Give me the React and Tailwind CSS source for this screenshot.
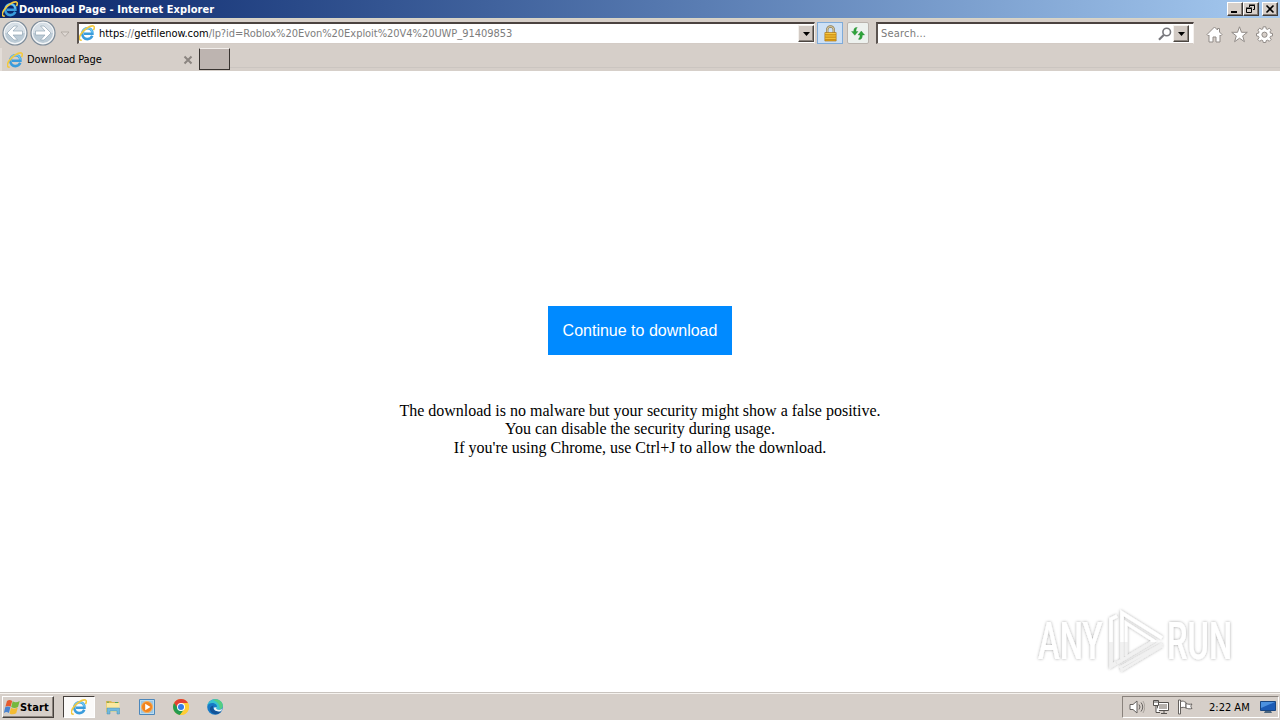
const InternetExplorerIcon = ({ className }) => (
    <svg viewBox="0 0 16 16" className={className} fill="none">
        <path d="M13.300 10.800C12.400 12.900 10.600 14.100 8.400 14.100C5.300 14.100 3.300 11.800 3.300 8.700C3.300 5.500 5.500 3.300 8.500 3.300C11.500 3.300 13.400 5.400 13.400 8.700H5" stroke="#3a9cdc" strokeWidth="2.600" />
        <path d="M3.300 7.600C3.900 4.900 5.900 3.200 8.500 3.200C11 3.200 12.900 4.800 13.300 7.600" stroke="#6fcbf6" strokeWidth="1.300" />
        <path d="M2.700 15C-.2 15.900-.3 12.500 2 9C5.300 4 11.700 0 14.500 1.100C15.700 1.700 15.400 3.600 14.400 5.200" stroke="#f3c93f" strokeWidth="1.600" />
    </svg>
);

const NavArrow = ({ forward }) => (
    <svg viewBox="0 0 26 26" className="h-[26px] w-[26px]">
        <circle cx="13" cy="13" r="12" fill="#f3f5f7" stroke="#7c8b99" strokeWidth="1.200" />
        <circle cx="13" cy="13" r="10" fill="#bccbd6" />
        <path d="M3 13a10 10 0 0 1 20 0z" fill="#d8e0e7" />
        <path
            d="M5 13L12 6h3.500L11 11h9.500v4H11l4.500 5H12z"
            fill="#fff"
            stroke="#94a6b5"
            strokeWidth=".7"
            transform={forward ? "rotate(180 13 13)" : undefined}
        />
    </svg>
);

const DropButton = () => (
    <div className="flex h-[17px] w-4 shrink-0 items-center justify-center border border-t-[#f4f1ed] border-r-[#4c4641] border-b-[#4c4641] border-l-[#f4f1ed] bg-[#d2cac4] shadow-[inset_-1px_-1px_0_#8b847e]">
        <svg viewBox="0 0 7 4" className="h-1 w-[7px]">
            <path d="M0 0h7L3.500 4z" fill="#000" />
        </svg>
    </div>
);

const WindowButton = ({ children }) => (
    <div className="h-[14px] w-4 border border-t-white border-r-[#403c39] border-b-[#403c39] border-l-white bg-[#d6cfc9] shadow-[inset_-1px_-1px_0_#847d77]">
        <svg viewBox="0 0 14 12" className="h-3 w-[14px]" fill="none" stroke="#000">
            {children}
        </svg>
    </div>
);

const TitleBar = () => (
    <div className="flex h-[18px] items-center bg-linear-to-r from-[#0a246a] to-[#a6caf0] pr-[2px] pl-[2px]">
        <InternetExplorerIcon className="h-4 w-4 shrink-0" />
        <span className="ml-px text-[11px] font-bold tracking-[0.07px] text-white">Download Page - Internet Explorer</span>
        <div className="ml-auto flex">
            <WindowButton>
                <path d="M3 9h6" strokeWidth="2" />
            </WindowButton>
            <WindowButton>
                <path d="M5.500 4V2.500h5v4H9M5 2h6M2.500 5.500h5v4h-5zM2 5h6" />
            </WindowButton>
            <div className="ml-[3px]">
                <WindowButton>
                    <path d="M3.500 2.500l7 7M10.500 2.500l-7 7" strokeWidth="1.600" />
                </WindowButton>
            </div>
        </div>
    </div>
);

const AddressBar = () => (
    <div className="flex h-[30px] items-start border-t border-[#d8d5c5] pl-[2px]">
        <div className="flex pt-px">
            <NavArrow />
            <div className="ml-[2px]">
                <NavArrow forward />
            </div>
        </div>
        <svg viewBox="0 0 10 7" className="mt-[12px] ml-[4px] h-[7px] w-[10px]">
            <path d="M1 1h8L5 5.500z" fill="#dfd9d4" stroke="#aaa39d" strokeWidth=".8" />
        </svg>
        <div className="mt-[3px] ml-[7px] flex h-[22px] w-[738px] items-center border-t-2 border-r border-b border-l-2 border-t-[#4b4340] border-r-[#f5f1ee] border-b-[#d4ccc6] border-l-[#5b5450] bg-white">
            <InternetExplorerIcon className="mb-px h-4 w-4 shrink-0" />
            <span className="ml-1 text-[11px] whitespace-nowrap text-[#7d7d7d]">
                <span className="tracking-[-0.04px]">
                    <span className="text-black">https</span>://<span className="text-black">getfilenow.com</span>
                </span>
                <span className="tracking-[-0.04px]">/lp?id=Roblox%20Evon%20Exploit%20V4%20UWP_91409853</span>
            </span>
            <div className="ml-auto">
                <DropButton />
            </div>
        </div>
        <div className="mt-[3px] ml-[2px] flex h-[22px] w-[26px] items-center justify-center border border-[#7fabd9] bg-[#cde0f5]">
            <svg viewBox="0 0 16 18" className="h-[17px] w-[15px]">
                <path d="M4.500 9V5a3.500 3.500 0 0 1 7 0v4" fill="none" stroke="#8b7b58" strokeWidth="2.500" />
                <path d="M4.500 9V5a3.500 3.500 0 0 1 7 0v4" fill="none" stroke="#e8d9aa" strokeWidth="1" />
                <path d="M2 8h12v9H2z" fill="#e6a91b" stroke="#a87315" strokeWidth=".7" />
                <path d="M2.500 9h11M2.500 11.500h11M2.500 14h11" stroke="#f6cb4a" />
                <path d="M2.500 10.500h11M2.500 13h11M2.500 15.500h11" stroke="#b67813" strokeWidth=".6" />
            </svg>
        </div>
        <div className="mt-[3px] ml-1 flex h-[22px] w-[22px] items-center justify-center rounded-[2px] border border-[#bab3ad] bg-[#edf1ee]">
            <svg viewBox="0 0 16 16" className="h-4 w-4" fill="#2fa43a" stroke="#167b24" strokeWidth=".3">
                <path d="M7.300 2.500C5 2 3.700 3.500 3.700 6.500H1.500l3.300 3.800L8 6.500H6c0-2 .3-3 1.300-4z" />
                <path d="M8.700 14.500c2.300.3 3.700-1 3.700-4.500h2.200l-3.300-4L8 10h2c0 2-.3 3-1.300 3.600z" />
            </svg>
        </div>
        <div className="mt-[3px] ml-[7px] flex h-[22px] w-[318px] items-center border-t-2 border-r border-b border-l-2 border-t-[#4b4340] border-r-[#f5f1ee] border-b-[#d4ccc6] border-l-[#5b5450] bg-white pr-1 pl-[3px]">
            <span className="text-[11px] tracking-[0.2px] text-[#7a7a7a]">Search...</span>
            <svg viewBox="0 0 14 14" className="mr-px ml-auto h-[14px] w-[14px]" fill="none" stroke="#77777c">
                <circle cx="8.700" cy="5" r="3.800" strokeWidth="1.600" />
                <path d="M5.700 8L1 12.700" strokeWidth="2.200" />
            </svg>
            <DropButton />
        </div>
        <div className="mt-[7px] ml-[12px] flex gap-2">
            <svg viewBox="0 0 17 17" className="h-[17px] w-[17px]" fill="#fff" stroke="#918b87" strokeLinejoin="round">
                <path d="M1 8.500L8.500 1l3 3V2.500h2V6L16 8.500l-1.200 1.300-.8-.8v7h-4v-5H7v5H3V9l-.8.800z" />
            </svg>
            <svg viewBox="0 0 17 17" className="h-[17px] w-[17px]" fill="#fff" stroke="#918b87" strokeLinejoin="round">
                <path d="M8.500.8l2 5.500h5.800l-4.600 3.600 1.700 5.800-4.900-3.500-4.900 3.500 1.700-5.800L.7 6.300h5.800z" />
            </svg>
            <svg viewBox="0 0 17 17" className="h-[17px] w-[17px]" fill="#fff" stroke="#918b87" strokeLinejoin="round">
                <path d="M7.200.8h2.600l.4 2.100 1.300.5 1.800-1.200 1.900 1.900L14 5.900l.5 1.300 2 .3v2.400l-2 .4-.5 1.300 1.200 1.800-1.900 1.900-1.800-1.200-1.300.5-.4 1.900H7.200l-.4-1.900-1.300-.5-1.800 1.200-1.900-1.900L3 11.600l-.5-1.300-2-.4V7.500l2-.3L3 5.900 1.800 4.100l1.900-1.900 1.800 1.200 1.300-.5z" />
                <circle cx="8.500" cy="8.700" r="2.600" fill="#d6cfc9" />
            </svg>
        </div>
    </div>
);

const TabStrip = () => (
    <div className="flex h-[23px] items-start">
        <div className="flex h-[23px] w-[199px] items-center border-l-2 border-[#e3ddd8] pr-[6px] pl-[5px]">
            <InternetExplorerIcon className="h-4 w-4 shrink-0" />
            <span className="ml-1 text-[11px] tracking-[-0.12px]">Download Page</span>
            <svg viewBox="0 0 10 10" className="ml-auto h-[10px] w-[10px]" stroke="#8b8580" strokeWidth="2">
                <path d="M1.500 1.500l7 7M8.500 1.500l-7 7" />
            </svg>
        </div>
        <div className="h-[22px] w-[31px] border border-t-[#f2eeeb] border-r-[#383330] border-b-[#383330] border-l-[#383330] bg-[#bdb4b0]" />
        <div className="mt-[19px] h-px flex-1 bg-[#cbc5c0]" />
    </div>
);

const Watermark = () => (
    <svg viewBox="0 0 250 80" className="absolute right-[20px] bottom-[11px] h-20 w-[250px] overflow-visible">
        <defs>
            <linearGradient id="glass" gradientUnits="userSpaceOnUse" x1="0" y1="0" x2="0" y2="80">
                <stop offset="0.510" stopColor="#ffffff" />
                <stop offset="0.510" stopColor="#f1f1f1" />
            </linearGradient>
            <filter id="halo" x="-10%" y="-20%" width="120%" height="140%">
                <feDropShadow dx="0" dy="0" stdDeviation="1.800" floodColor="#000" floodOpacity="0.360" />
            </filter>
        </defs>
        <g filter="url(#halo)" fontFamily="Roboto" fontWeight="500" fontSize="52" fill="url(#glass)">
            <text transform="translate(28 58) scale(0.630 1)">ANY</text>
            <text transform="translate(157 58) scale(0.630 1)">RUN</text>
            <g fill="none" stroke="url(#glass)" strokeWidth="3.600">
                <path d="M107 15L101 18V65L106 62" />
                <path d="M112 58V12L152 37" />
                <path d="M116 55V22L144 40L107 62" strokeWidth="3" />
                <path d="M152 43L111 66L112 69L152 45" strokeWidth="2.500" />
            </g>
        </g>
    </svg>
);

const DownloadPage = () => (
    <div className="relative flex h-[621px] flex-col items-center bg-white pt-[235px]">
        <button className="h-[49px] w-[184px] bg-[#008aff] font-['Liberation_Sans',sans-serif] text-[16px] text-white">
            Continue to download
        </button>
        <div className="mt-[47px] text-center font-['Liberation_Serif',serif] text-[16px] leading-[18px] text-black">
            <p>The download is no malware but your security might show a false positive.</p>
            <p>You can disable the security during usage.</p>
            <p className="mt-px">If you're using Chrome, use Ctrl+J to allow the download.</p>
        </div>
        <Watermark />
    </div>
);

const Taskbar = () => (
    <div className="flex h-7 items-start border-t border-[#c9c4bf] bg-[#d6cfc9] pl-[2px] shadow-[inset_0_1px_0_#f6f3ef]">
        <div className="mt-[3px] flex h-[22px] w-[52px] items-center border border-t-white border-r-[#45403c] border-b-[#45403c] border-l-white pl-px shadow-[inset_-1px_-1px_0_#8b847e]">
            <svg viewBox="0 0 16 16" className="h-4 w-4 shrink-0">
                <path d="M3 2C5 .5 6.500 1 8.200 2L6.600 7.700C5 6.700 3.400 6.700 1.400 7.700z" fill="#e65b2e" />
                <path d="M8.700 2.300c2 1.300 4.300 1.300 7 -.4l-1.600 5.900c-2.300 1.600-4.800 1.600-6.900.2z" fill="#75b83d" />
                <path d="M1.200 8.200c1.900-1 3.700-1 5.200 0L4.900 14c-1.800-1.200-3.300-1.200-5 0z" fill="#4a83cf" />
                <path d="M7 8.700c2 1.300 4.500 1.300 6.800-.2L12.200 14.200c-2.200 1.500-4.700 1.500-6.700.2z" fill="#f4bc32" />
            </svg>
            <span className="text-[11px] font-bold tracking-[0.15px]">Start</span>
        </div>
        <div className="mt-[3px] ml-[9px] flex h-[22px] w-8 items-center justify-center border border-t-[#45403c] border-r-white border-b-white border-l-[#45403c] bg-[#fbfaf9]">
            <InternetExplorerIcon className="h-4 w-4" />
        </div>
        <div className="mt-[6px] ml-[10px] flex gap-[18px]">
            <svg viewBox="0 0 16 16" className="h-4 w-4">
                <path d="M1 2h5l1 1h7v10H1z" fill="#d9b652" />
                <path d="M1.500 4h13v9h-13z" fill="#fae9a0" />
                <path d="M3 4V2.500M10 3.500h3" stroke="#55a55a" strokeWidth="1.200" />
                <path d="M2 9h12.500v6H12v-3H5v3H2z" fill="#71b9de" stroke="#448caf" strokeWidth=".5" />
            </svg>
            <svg viewBox="0 0 16 16" className="h-4 w-4">
                <path d="M.5.5h15v15H.5z" fill="#badcf0" stroke="#4c87bb" />
                <path d="M2 2h12v12H2z" fill="#9cc6e4" />
                <circle cx="8" cy="8" r="5.500" fill="#f1841e" stroke="#fbb15b" />
                <path d="M6.200 4.700L11.500 8l-5.300 3.300z" fill="#fff" />
            </svg>
            <svg viewBox="0 0 16 16" className="h-4 w-4">
                <circle cx="8" cy="8" r="8" fill="#ffcd35" />
                <path d="M1.070 4A8 8 0 0 1 14.930 4H8L4.500 10z" fill="#e34134" />
                <path d="M1.070 4A8 8 0 0 0 7 15.900L11.460 10 8 8H4z" fill="#249b50" />
                <path d="M14.930 4A8 8 0 0 1 7 15.940L11.500 10 10 4z" fill="#ffcd35" />
                <circle cx="8" cy="8" r="4" fill="#fff" />
                <circle cx="8" cy="8" r="3" fill="#347ce8" />
            </svg>
            <svg viewBox="0 0 16 16" className="h-4 w-4">
                <circle cx="8" cy="8" r="7.800" fill="#1679c6" />
                <path d="M.3 7C1 2.500 4.300.2 8.200.2c4.600 0 7.600 3.300 7.600 6.400 0 2.600-2 4.200-4.300 4.200-1.900 0-3.100-.8-2-2C11 6.700 8.500 4 5.300 4 2.900 4 1 5.300.3 7z" fill="#37c3d0" />
                <path d="M8.200.2c4.600 0 7.600 3.300 7.600 6.400 0 2-1.300 3.500-2.900 4C13 6 11 3 6 1z" fill="#55ce82" />
                <path d="M6.500 6.500C4.500 10 8.500 14 14.500 12 11.300 16.800 4.200 16 3 10.800 2.600 8.800 4 6.900 6.500 6.500z" fill="#125398" />
                <path d="M9.800 8.300c-1.500 1.500.2 2.500 2 2.500 1.500 0 2.700-.5 3.400-1.400l-.9 2.500c-4 1.500-8-.5-7.500-3.400z" fill="#eef5f6" />
            </svg>
        </div>
        <div className="mt-[3px] mr-px ml-auto flex h-[22px] w-[157px] items-center border border-t-[#89827c] border-r-white border-b-white border-l-[#89827c] pr-[2px] pl-[6px]">
            <svg viewBox="0 0 16 16" className="h-4 w-4" fill="none" stroke="#65615e">
                <path d="M1 5.500h3L8 2v12l-4-3.500H1z" fill="#fff" strokeLinejoin="round" />
                <path d="M10 5.500q2 2.500 0 5M12 3.500q3.500 4.500 0 9" />
                <path d="M14 2q3.500 6 0 12" stroke="#98928d" strokeWidth=".7" />
            </svg>
            <svg viewBox="0 0 16 16" className="ml-2 h-4 w-4" fill="#fff" stroke="#55514e">
                <path d="M4.500 3.500h11v8h-11zM8 14.500h6M11 11.500v3" />
                <path d="M6 5h8v5H6z" fill="#b5b0ac" stroke="none" />
                <path d="M.5 1.500h5v5h-5zM3 6.500v7h4" />
                <path d="M2 1v3M4 1v3" />
            </svg>
            <svg viewBox="0 0 16 16" className="ml-2 h-4 w-4" fill="#fff" stroke="#65615e">
                <path d="M1.500 1h2v14h-2z" />
                <path d="M3.500 2.500C6 1.500 7 2.500 9 3.500V9c-2-.8-3.500-1-5.500 0z" />
                <path d="M9 4.500c2 .8 3.500 1 6 .5-1.500 2-1.500 2.500 0 4.500-2.500.7-4 .3-6-.5z" />
            </svg>
            <span className="ml-4 text-[11px] whitespace-nowrap">2:22 AM</span>
            <svg viewBox="0 0 16 16" className="ml-auto h-4 w-4">
                <path d="M.5 2.500h15v9H.5z" fill="#1c5bb5" stroke="#194681" />
                <path d="M1 3h14L1 9z" fill="#4c91df" />
                <path d="M5 12h6l1 2H4z" fill="#4b657d" />
            </svg>
        </div>
    </div>
);

const App = () => {
    return (
        <div className="h-[720px] w-[1280px] overflow-hidden bg-[#d6cfc9] font-['DejaVu_Sans_Condensed','DejaVu_Sans',sans-serif] leading-none text-black">
            <TitleBar />
            <AddressBar />
            <TabStrip />
            <DownloadPage />
            <Taskbar />
        </div>
    );
};

export default App;
